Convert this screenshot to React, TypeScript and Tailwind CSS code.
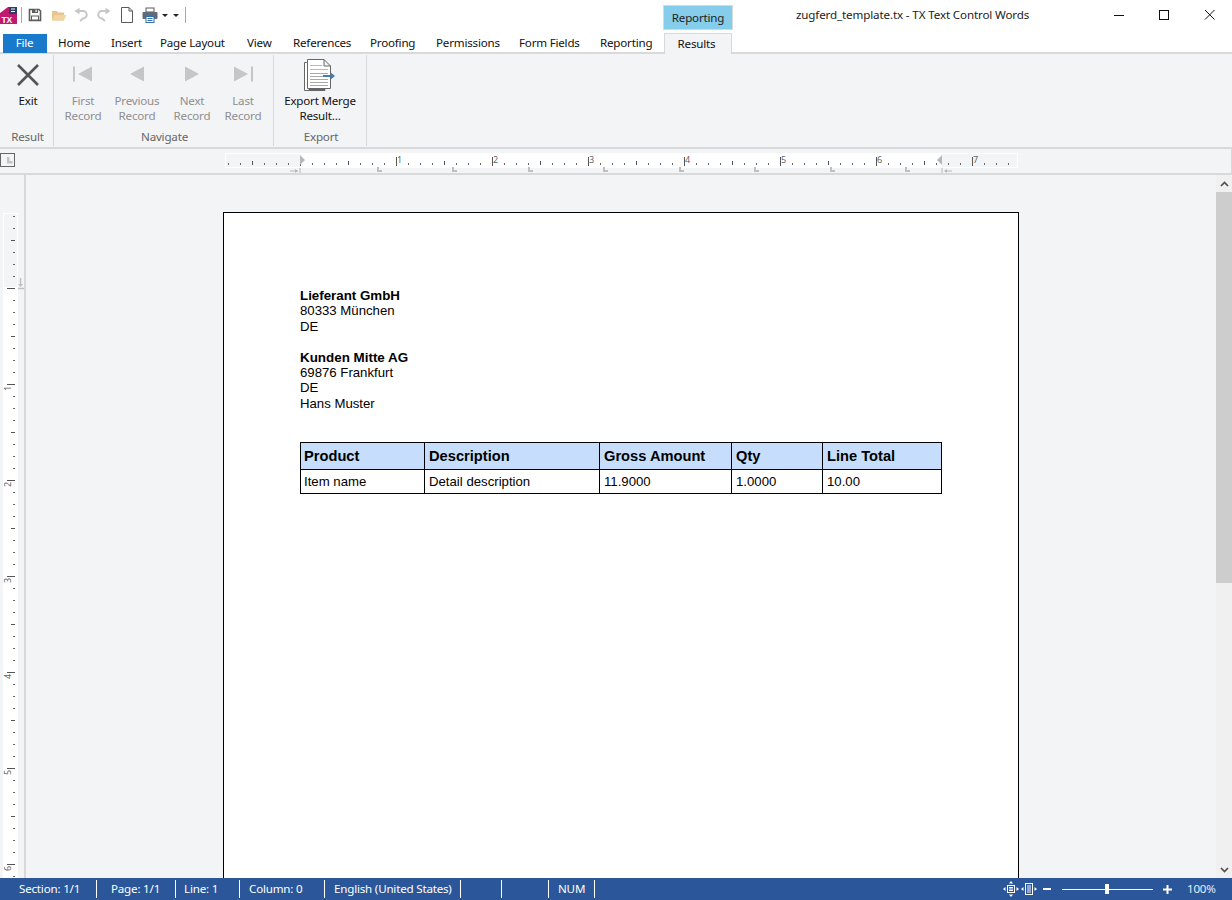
import { ReactNode } from 'react';

const tabs = [
  { label: 'Home', cls: 'w-[53px]' },
  { label: 'Insert', cls: 'w-[49px]' },
  { label: 'Page Layout', cls: 'w-[87px]' },
  { label: 'View', cls: 'w-[46px]' },
  { label: 'References', cls: 'w-[77px]' },
  { label: 'Proofing', cls: 'w-[66px]' },
  { label: 'Permissions', cls: 'w-[83px]' },
  { label: 'Form Fields', cls: 'w-[81px]' },
  { label: 'Reporting', cls: 'w-[64px]' },
];

const statusItems = [
  { label: 'Section: 1/1', cls: 'w-[97px] pl-[19px]' },
  { label: 'Page: 1/1', cls: 'w-[79px] pl-[14px]' },
  { label: 'Line: 1', cls: 'w-[64px] pl-[8px]' },
  { label: 'Column: 0', cls: 'w-[85px] pl-[9px]' },
  { label: 'English (United States)', cls: 'w-[136px] pl-[9px]' },
  { label: '', cls: 'w-[41px]' },
  { label: '', cls: 'w-[47px]' },
  { label: 'NUM', cls: 'w-[46px] pl-[9px]' },
];

const columns = [
  { head: 'Product', cell: 'Item name', cls: 'w-[124px]', pad: 'pl-[3px]' },
  { head: 'Description', cell: 'Detail description', cls: 'w-[175px]', pad: 'pl-[4px]' },
  { head: 'Gross Amount', cell: '11.9000', cls: 'w-[132px]', pad: 'pl-[4px]' },
  { head: 'Qty', cell: '1.0000', cls: 'w-[91px]', pad: 'pl-[4px]' },
  { head: 'Line Total', cell: '10.00', cls: 'w-[119px]', pad: 'pl-[4px]' },
];

function Logo() {
  return (
    <svg width="17" height="17" viewBox="0 0 17 17" className="block">
      <path d="M0 6 L8 0 H17 V17 H0 Z" fill="#c2186f" />
      <rect x="9" y="0" width="8" height="7" fill="#2c3e63" />
      <path d="M11 2 h4 M11 4.5 h4" stroke="#fff" strokeWidth="1" />
      <text x="1.5" y="15.5" fontSize="8.5" fontWeight="700" fill="#fff" fontFamily="Liberation Sans, sans-serif">TX</text>
    </svg>
  );
}

function QatIcon({ children, cls }: { children: ReactNode; cls: string }) {
  return (
    <svg width="16" height="16" viewBox="0 0 16 16" className={`block shrink-0 ${cls}`}>
      {children}
    </svg>
  );
}

function Sep({ cls }: { cls: string }) {
  return <div className={`h-[16px] w-px bg-[#a8a8a8] shrink-0 ${cls}`} />;
}

function Caret({ cls }: { cls: string }) {
  return <div className={`w-0 h-0 border-x-[3px] border-x-transparent border-t-[3px] border-t-[#222] shrink-0 ${cls}`} />;
}

function QuickAccess() {
  return (
    <div className="w-[663px] h-[30px] flex items-center">
      <div className="mt-[1px]"><Logo /></div>
      <Sep cls="ml-[4px]" />
      <QatIcon cls="ml-[5px]">
        <path d="M2.5 2.5 H12 L13.5 4 V13.5 H2.5 Z" fill="none" stroke="#5a5a5a" strokeWidth="1.6" />
        <rect x="5" y="2" width="6" height="4" fill="#5a5a5a" />
        <rect x="8.5" y="2.7" width="1.2" height="2.4" fill="#fff" />
        <rect x="4.5" y="9" width="7" height="4" fill="#fff" stroke="#5a5a5a" />
      </QatIcon>
      <QatIcon cls="ml-[8px]">
        <path d="M1 4 H6 L7 5.5 H13 V13.5 H1 Z" fill="#e6c68e" />
        <path d="M3.5 8 H15.5 L13 13.5 H1 Z" fill="#f1d6a4" />
      </QatIcon>
      <QatIcon cls="ml-[6px]">
        <path d="M5 4 H10 A3.6 3.6 0 0 1 10 11.5 L7 14" fill="none" stroke="#c6c6c6" strokeWidth="2" />
        <path d="M1.5 4 L6.5 0.8 V7.5 Z" fill="#c6c6c6" />
      </QatIcon>
      <QatIcon cls="ml-[7px]">
        <path d="M11 4 H6 A3.6 3.6 0 0 0 6 11.5 L9 14" fill="none" stroke="#c6c6c6" strokeWidth="2" />
        <path d="M14.5 4 L9.5 0.8 V7.5 Z" fill="#c6c6c6" />
      </QatIcon>
      <QatIcon cls="ml-[7px]">
        <path d="M2.5 0.5 H10 L13.5 4 V15.5 H2.5 Z M10 0.5 V4 H13.5" fill="#fff" stroke="#5a5a5a" />
      </QatIcon>
      <QatIcon cls="ml-[7px]">
        <rect x="4" y="1" width="8" height="4" fill="#fff" stroke="#5a5a5a" />
        <rect x="0.5" y="5" width="15" height="7" rx="1" fill="#5f6b78" />
        <rect x="4" y="9.5" width="8" height="6" fill="#fff" stroke="#2f6ea8" />
        <path d="M5.5 11.5 h5 M5.5 13.5 h5" stroke="#2f6ea8" />
      </QatIcon>
      <Caret cls="ml-[4px]" />
      <Caret cls="ml-[5px]" />
      <Sep cls="ml-[6px]" />
    </div>
  );
}

function WindowControls() {
  return (
    <div className="flex items-center h-[30px] ml-auto">
      <svg width="118" height="12" viewBox="0 0 118 12" className="block">
        <path d="M0 6.5 H10" stroke="#111" />
        <rect x="45.5" y="1.5" width="9" height="9" fill="none" stroke="#111" />
        <path d="M91 1 L100.5 10.5 M100.5 1 L91 10.5" stroke="#111" />
      </svg>
    </div>
  );
}

function RibbonButton({ lines, width, disabled, children }: { lines: string[]; width: string; disabled?: boolean; children: ReactNode }) {
  return (
    <div className={`flex flex-col items-center shrink-0 ${width}`}>
      <div className="h-[38px] flex items-center justify-center">{children}</div>
      <div className={`text-center leading-[15px] ${disabled ? 'text-[#8f8f8f]' : 'text-[#111]'}`}>
        {lines.map(l => (
          <div key={l} className="whitespace-nowrap">{l}</div>
        ))}
      </div>
    </div>
  );
}

function RibbonGroup({ label, width, children }: { label: string; width: string; children: ReactNode }) {
  return (
    <div className={`h-[91px] border-r border-[#d9d9d9] flex flex-col justify-between shrink-0 ${width}`}>
      <div className="flex">{children}</div>
      <div className="h-[17px] leading-[15px] pl-[2px] text-center text-[#666]">{label}</div>
    </div>
  );
}

function Ribbon() {
  return (
    <div className="h-[95px] pt-[1px] bg-[#f3f4f6] border-b-2 border-[#d9d9d9] flex">
      <RibbonGroup label="Result" width="w-[54px]">
        <RibbonButton lines={['Exit']} width="w-[56px]">
          <svg width="22" height="22" viewBox="0 0 22 22" className="block mt-[1px]">
            <path d="M1 1 L21 21 M21 1 L1 21" stroke="#555" strokeWidth="2.6" />
          </svg>
        </RibbonButton>
      </RibbonGroup>
      <RibbonGroup label="Navigate" width="w-[220px]">
        <RibbonButton lines={['First', 'Record']} width="w-[58px]" disabled>
          <svg width="20" height="16" viewBox="0 0 20 16" className="block">
            <path d="M0 0.5 H2 V15.5 H0 Z M19 0.5 V15.5 L5 8 Z" fill="#c6c6c6" />
          </svg>
        </RibbonButton>
        <RibbonButton lines={['Previous', 'Record']} width="w-[50px]" disabled>
          <svg width="14" height="16" viewBox="0 0 14 16" className="block">
            <path d="M14 0.5 V15.5 L0 8 Z" fill="#c6c6c6" />
          </svg>
        </RibbonButton>
        <RibbonButton lines={['Next', 'Record']} width="w-[60px]" disabled>
          <svg width="14" height="16" viewBox="0 0 14 16" className="block">
            <path d="M0 0.5 V15.5 L14 8 Z" fill="#c6c6c6" />
          </svg>
        </RibbonButton>
        <RibbonButton lines={['Last', 'Record']} width="w-[42px]" disabled>
          <svg width="20" height="16" viewBox="0 0 20 16" className="block">
            <path d="M18 0.5 H20 V15.5 H18 Z M1 0.5 V15.5 L15 8 Z" fill="#c6c6c6" />
          </svg>
        </RibbonButton>
      </RibbonGroup>
      <RibbonGroup label="Export" width="w-[93px]">
        <RibbonButton lines={['Export Merge', 'Result...']} width="w-[92px]">
          <svg width="32" height="32" viewBox="0 0 32 32" className="block mt-[1px] mr-[2px]">
            <path d="M3.5 3.5 H6 V30.5 H22 V31.5 H1.5 V3.5 Z" fill="#fff" stroke="#666" />
            <path d="M4.5 0.5 H21 L27.5 7 V29.5 H4.5 Z M21 0.5 V7 H27.5" fill="#fff" stroke="#666" />
            <path d="M7 6.5 H19 M7 10.5 H25" stroke="#f0b050" />
            <path d="M7 14.5 H25 M7 17.5 H20 M7 20.5 H25 M7 23.5 H25 M7 26.5 H25" stroke="#a9a9a9" />
            <path d="M20 17 H29" stroke="#3f7cb8" strokeWidth="2" />
            <path d="M28 13.8 L32 17 L28 20.2 Z" fill="#3f7cb8" />
          </svg>
        </RibbonButton>
      </RibbonGroup>
    </div>
  );
}

function HorizontalRuler() {
  const ticks = Array.from({ length: 66 }, (_, i) => 228 + i * 12);
  const stops = [377, 452, 528, 603, 679, 754, 830, 905];
  const numbers = [1, 2, 3, 4, 5, 6, 7];
  return (
    <div className="h-[26px] border-b-2 border-[#d9d9d9] bg-[#f3f4f6] border-r border-r-[#d9d9d9] shrink-0">
      <svg width="1231" height="24" viewBox="0 0 1231 24" className="block">
        <rect x="0.5" y="4.5" width="14" height="13" fill="none" stroke="#666" />
        <path d="M7 8 H9.5 V12 H12.5 V14.5 H7 Z" fill="#c4c4c4" />
        <rect x="225.5" y="4.5" width="792" height="14" fill="#f3f4f6" stroke="#fff" />
        <rect x="300" y="4" width="642" height="15" fill="#fff" />
        {ticks.map(x => {
          const offset = (x - 300) / 12;
          if (offset % 8 === 0) {
            return <rect key={x} x={x} y="8" width="1" height="9" fill="#555" />;
          }
          if (offset % 4 === 0) {
            return <rect key={x} x={x} y="12" width="1" height="4" fill="#555" />;
          }
          return <rect key={x} x={x} y="14" width="1" height="2" fill="#666" />;
        })}
        {numbers.map(n => (
          <text key={n} x={301 + n * 96} y="14" fontSize="9" fill="#666" fontFamily="Noto Sans, sans-serif">{n}</text>
        ))}
        <path d="M300 6 L305 11 L300 16 Z M942 6 L937 11 L942 16 Z" fill="#b8b8b8" />
        {stops.map(x => (
          <path key={x} d={`M${x} 18 h2 v3 h3 v2 h-5 Z`} fill="#c0c0c0" />
        ))}
        <path d="M290 22 h8 M300 19 v5 M942 19 v5 M945 22 h7" stroke="#b8b8b8" />
        <path d="M295 20 l3 2 l-3 2 Z M947 20 l-3 2 l3 2 Z" fill="#b8b8b8" />
      </svg>
    </div>
  );
}

function VerticalRuler() {
  const ticks = Array.from({ length: 56 }, (_, i) => 216 + i * 12 - 175);
  const numbers = [1, 2, 3, 4, 5, 6];
  return (
    <div className="w-[24px] shrink-0 bg-[#f3f4f6]">
      <svg width="24" height="704" viewBox="0 0 24 704" className="block">
        <rect x="3.5" y="38.5" width="14" height="666" fill="#f3f4f6" stroke="#fff" />
        <rect x="3" y="112" width="15" height="592" fill="#fff" />
        {ticks.map(y => {
          const offset = (y - 113) / 12;
          if (offset % 8 === 0) {
            return <rect key={y} x="7" y={y} width="8" height="1" fill="#555" />;
          }
          if (offset % 4 === 0) {
            return <rect key={y} x="11" y={y} width="4" height="1" fill="#555" />;
          }
          return <rect key={y} x="13" y={y} width="2" height="1" fill="#666" />;
        })}
        {numbers.map(n => (
          <text
            key={n}
            x="0"
            y="0"
            fontSize="9"
            fill="#666"
            fontFamily="Noto Sans, sans-serif"
            transform={`translate(11 ${113 + n * 96 + 2}) rotate(-90)`}
            textAnchor="end"
          >
            {n}
          </text>
        ))}
        <path d="M20.5 103 V111 M18 113.5 H24" stroke="#c0c0c0" strokeWidth="1.5" />
        <path d="M18 109 H23 L20.5 112 Z" fill="#c0c0c0" />
      </svg>
    </div>
  );
}

function Page() {
  return (
    <div className="ml-[197px] mt-[37px] w-[796px] h-[800px] bg-white border border-black pl-[76px] pt-[75px] font-['Liberation_Sans',Arial,sans-serif] text-[13.2px] leading-[15.4px] tracking-normal text-black">
      <div className="font-bold text-[13.33px]">Lieferant GmbH</div>
      <div>80333 München</div>
      <div>DE</div>
      <div className="h-[15.4px]" />
      <div className="font-bold text-[13.4px]">Kunden Mitte AG</div>
      <div>69876 Frankfurt</div>
      <div>DE</div>
      <div>Hans Muster</div>
      <table className="mt-[31px] w-[641px] table-fixed border-collapse">
        <thead>
          <tr className="h-[27px] bg-[#c6defc]">
            {columns.map(c => (
              <th key={c.head} className={`border border-black pt-[1px] text-left font-bold text-[14.67px] ${c.pad} ${c.cls}`}>
                {c.head}
              </th>
            ))}
          </tr>
        </thead>
        <tbody>
          <tr className="h-[24px]">
            {columns.map(c => (
              <td key={c.head} className={`border border-black ${c.pad}`}>{c.cell}</td>
            ))}
          </tr>
        </tbody>
      </table>
    </div>
  );
}

function Scrollbar() {
  return (
    <div className="w-[16px] shrink-0 bg-[#f0f0f0] flex flex-col">
      <div className="h-[17px] flex items-center justify-center">
        <svg width="9" height="6" viewBox="0 0 9 6" className="block">
          <path d="M1 5 L4.5 1.5 L8 5" fill="none" stroke="#505050" strokeWidth="1.7" />
        </svg>
      </div>
      <div className="h-[391px] bg-[#cdcdcd]" />
      <div className="flex-1" />
      <div className="h-[17px] flex items-center justify-center">
        <svg width="9" height="6" viewBox="0 0 9 6" className="block">
          <path d="M1 1 L4.5 4.5 L8 1" fill="none" stroke="#505050" strokeWidth="1.7" />
        </svg>
      </div>
    </div>
  );
}

function StatusBar() {
  return (
    <div className="h-[22px] shrink-0 bg-[#2b579a] text-white flex items-center leading-[22px]">
      {statusItems.map((s, i) => (
        <div key={i} className={`h-[18px] leading-[17px] border-r border-white whitespace-nowrap shrink-0 ${s.cls}`}>
          {s.label}
        </div>
      ))}
      <div className="ml-auto flex items-center pr-[17px]">
        <svg width="16" height="16" viewBox="0 0 16 16" className="block">
          <rect x="4.5" y="4.5" width="7" height="7" fill="none" stroke="#fff" />
          <path d="M6 6.5 h4 M6 8 h4 M6 9.5 h4" stroke="#fff" />
          <path d="M8 0 L10 2.5 H6 Z M8 16 L10 13.5 H6 Z M0 8 L2.5 6 V10 Z M16 8 L13.5 6 V10 Z" fill="#fff" />
        </svg>
        <svg width="16" height="14" viewBox="0 0 16 14" className="block ml-[2px]">
          <rect x="4.5" y="1.5" width="7" height="11" fill="none" stroke="#fff" />
          <path d="M6 4 h4 M6 6 h4 M6 8 h4 M6 10 h4" stroke="#fff" />
          <path d="M0 7 L2.5 5 V9 Z M16 7 L13.5 5 V9 Z" fill="#fff" />
        </svg>
        <div className="w-[8px] h-[2px] bg-white ml-[6px]" />
        <div className="relative w-[91px] h-px bg-white ml-[11px]">
          <div className="absolute left-[43px] top-[-5px] w-[4px] h-[10px] bg-white" />
        </div>
        <svg width="9" height="9" viewBox="0 0 9 9" className="block ml-[10px]">
          <path d="M0 4.5 H9 M4.5 0 V9" stroke="#fff" strokeWidth="2" />
        </svg>
        <div className="ml-[15px] w-[28px] text-[#e8eef7]">100%</div>
      </div>
    </div>
  );
}

export default function App() {
  return (
    <div className="w-[1232px] h-[900px] overflow-hidden flex flex-col bg-white text-[11.6px] tracking-[-0.2px] text-[#111] font-['Noto_Sans',sans-serif]">
      <div className="h-[33px] shrink-0 flex items-start">
        <QuickAccess />
        <div className="mt-[5px] w-[70px] h-[25px] bg-[#85cdea] border border-[#d9d9d9] text-center leading-[24px] text-[#222]">
          Reporting
        </div>
        <div className="ml-[63px] h-[30px] leading-[30px] text-[#222] tracking-[-0.13px] whitespace-nowrap">zugferd_template.tx - TX Text Control Words</div>
        <WindowControls />
      </div>
      <div className="h-[21px] shrink-0 flex border-b-2 border-[#d9d9d9]">
        <div className="ml-[3px] w-[44px] h-[19px] bg-[#1979ca] text-white text-center leading-[18px] pr-[1px] mt-px">File</div>
        <div className="ml-[11px] flex">
          {tabs.map(t => (
            <div key={t.label} className={`leading-[19px] whitespace-nowrap ${t.cls}`}>{t.label}</div>
          ))}
        </div>
        <div className="w-[68px] h-[21px] bg-[#f3f4f6] border-x border-t border-[#d9d9d9] text-center leading-[19px] pr-[3px] relative z-10">
          Results
        </div>
      </div>
      <Ribbon />
      <HorizontalRuler />
      <div className="flex-1 min-h-0 flex bg-[#f3f4f6]">
        <VerticalRuler />
        <div className="flex-1 min-w-0 overflow-hidden border-l-2 border-[#d9d9d9]">
          <Page />
        </div>
        <Scrollbar />
      </div>
      <StatusBar />
    </div>
  );
}
